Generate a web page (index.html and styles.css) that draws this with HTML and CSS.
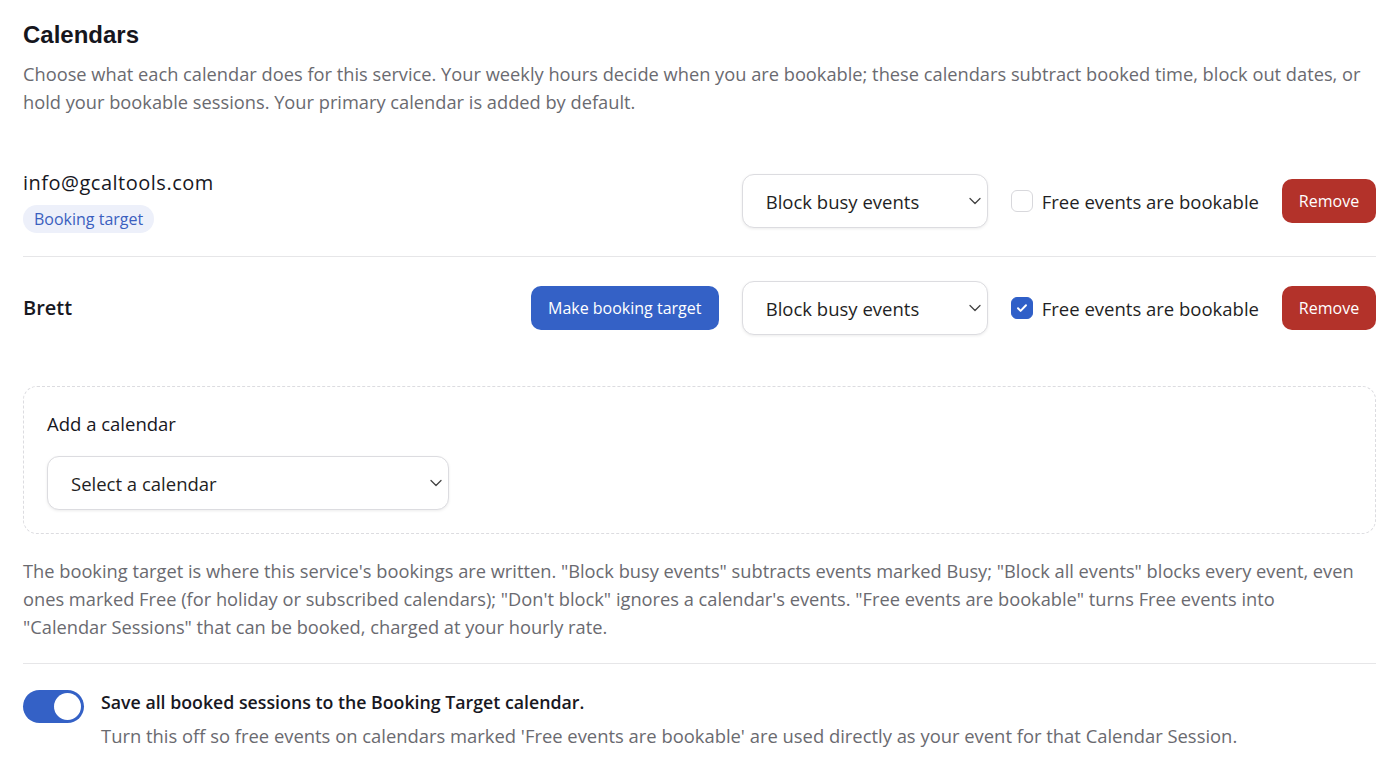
FILE: index.html
```html
<!DOCTYPE html>
<html>

<head>
    <meta charset="utf-8">
    <meta name="viewport" content="width=device-width">
    <title>Calendars</title>
    <link rel="stylesheet" href="styles.css">
</head>

<body>
    <div class="page">
        <h2 class="title">Calendars</h2>
        <p class="intro">Choose what each calendar does for this service. Your weekly hours decide when you are bookable; these calendars subtract booked time, block out dates, or hold your bookable sessions. Your primary calendar is added by default.</p>

        <div class="cal-list">
            <div class="cal-row">
                <div class="cal-name">
                    <div class="name">info@gcaltools.com</div>
                    <span class="badge">Booking target</span>
                </div>
                <div class="cal-controls">
                    <div class="select-wrap">
                        <select class="select">
                            <option>Block busy events</option>
                            <option>Block all events</option>
                            <option>Don't block</option>
                        </select>
                        <svg class="chev" width="12" height="8" viewBox="0 0 12 8"><path d="M1 1.5l5 5 5-5" fill="none" stroke="#444" stroke-width="1.3" stroke-linecap="round" stroke-linejoin="round"/></svg>
                    </div>
                    <label class="check">
                        <span class="box"></span>
                        <span>Free events are bookable</span>
                    </label>
                    <button class="btn btn-red">Remove</button>
                </div>
            </div>

            <div class="cal-row">
                <div class="cal-name">
                    <div class="name bold">Brett</div>
                </div>
                <div class="cal-controls">
                    <button class="btn btn-blue">Make booking target</button>
                    <div class="select-wrap">
                        <select class="select">
                            <option>Block busy events</option>
                            <option>Block all events</option>
                            <option>Don't block</option>
                        </select>
                        <svg class="chev" width="12" height="8" viewBox="0 0 12 8"><path d="M1 1.5l5 5 5-5" fill="none" stroke="#444" stroke-width="1.3" stroke-linecap="round" stroke-linejoin="round"/></svg>
                    </div>
                    <label class="check">
                        <span class="box on">
                            <svg width="14" height="14" viewBox="0 0 14 14"><path d="M3 7.3l2.6 2.6L11 4.3" fill="none" stroke="#fff" stroke-width="2" stroke-linecap="round" stroke-linejoin="round"/></svg>
                        </span>
                        <span>Free events are bookable</span>
                    </label>
                    <button class="btn btn-red">Remove</button>
                </div>
            </div>
        </div>

        <div class="add-box">
            <div class="add-label">Add a calendar</div>
            <div class="select-wrap wide">
                <select class="select">
                    <option>Select a calendar</option>
                </select>
                <svg class="chev" width="12" height="8" viewBox="0 0 12 8"><path d="M1 1.5l5 5 5-5" fill="none" stroke="#444" stroke-width="1.3" stroke-linecap="round" stroke-linejoin="round"/></svg>
            </div>
        </div>

        <p class="help">The booking target is where this service's bookings are written. "Block busy events" subtracts events marked Busy; "Block all events" blocks every event, even ones marked Free (for holiday or subscribed calendars); "Don't block" ignores a calendar's events. "Free events are bookable" turns Free events into "Calendar&nbsp;Sessions" that can be booked, charged at your hourly rate.</p>

        <div class="toggle-row">
            <span class="toggle"><span class="knob"></span></span>
            <div class="toggle-text">
                <div class="toggle-title">Save all booked sessions to the Booking Target calendar.</div>
                <div class="toggle-sub">Turn this off so free events on calendars marked 'Free events are bookable' are used directly as your event for that Calendar Session.</div>
            </div>
        </div>
    </div>
</body>

</html>
```

FILE: styles.css
```css
body {
    margin: 0;
    background: #fff;
    font-family: "Open Sans", "Lato", sans-serif;
    color: #1f1f24;
}

.page {
    padding: 19px 24px 20px 23px;
}

.title {
    margin: 0;
    font-family: "Liberation Sans", Arial, sans-serif;
    font-size: 24px;
    line-height: 32px;
    font-weight: bold;
    color: #16161d;
}

.intro {
    margin: 9px 0 0;
    font-size: 18.25px;
    line-height: 28px;
    color: #6a6a70;
}

.cal-list {
    margin-top: 29px;
}

.cal-row {
    display: flex;
    align-items: center;
    justify-content: space-between;
    padding: 24px 0 23px;
    border-bottom: 1px solid #e6e6e8;
}

.cal-row:last-child {
    border-bottom: none;
}

.name {
    font-size: 20px;
    line-height: 28px;
    font-weight: 500;
    letter-spacing: .5px;
    color: #18181f;
}

.name.bold {
    font-weight: 600;
    letter-spacing: 0;
}

.badge {
    display: inline-block;
    margin-top: 8px;
    padding: 0 11px;
    height: 28px;
    line-height: 28px;
    border-radius: 14px;
    background: #edf0fa;
    color: #3b5fbf;
    font-size: 16px;
}

.cal-controls {
    display: flex;
    align-items: center;
    gap: 23px;
}

.select-wrap {
    position: relative;
    width: 246px;
}

.select-wrap.wide {
    width: 402px;
}

.select {
    display: block;
    width: 100%;
    height: 54px;
    padding: 0 36px 0 23px;
    border: 1px solid #dcdce0;
    border-radius: 12px;
    background: #fff;
    box-shadow: 0 1px 3px rgba(0, 0, 0, .08);
    font-family: inherit;
    font-size: 18.5px;
    color: #1f1f24;
    appearance: none;
    -webkit-appearance: none;
}

.chev {
    position: absolute;
    right: 7px;
    top: 23px;
    pointer-events: none;
}

.check {
    display: flex;
    align-items: center;
    gap: 9px;
    font-size: 18.5px;
    color: #1f1f24;
}

.box {
    display: flex;
    align-items: center;
    justify-content: center;
    width: 20px;
    height: 20px;
    border: 1px solid #d8d8dc;
    border-radius: 6px;
    background: #fff;
}

.box.on {
    background: #2f5fc8;
    border-color: #2f5fc8;
}

.btn {
    height: 44px;
    padding: 0 10px;
    border: none;
    border-radius: 10px;
    font-family: inherit;
    font-size: 16px;
    font-weight: 500;
    color: #fff;
    cursor: pointer;
}

.btn-red {
    width: 94px;
    background: #b3322a;
}

.btn-blue {
    width: 188px;
    background: #3461c6;
}

.add-box {
    margin-top: 28px;
    padding: 24px 23px 23px;
    border: 1px dashed #dcdce0;
    border-radius: 14px;
}

.add-label {
    margin-bottom: 19px;
    font-size: 18.5px;
    line-height: 26px;
    font-weight: 500;
    color: #18181f;
}

.help {
    margin: 23px 0 0;
    padding-bottom: 22px;
    border-bottom: 1px solid #e6e6e8;
    font-size: 18.25px;
    line-height: 28px;
    color: #6a6a70;
}

.toggle-row {
    display: flex;
    align-items: flex-start;
    gap: 17px;
    margin-top: 25px;
}

.toggle {
    position: relative;
    flex: none;
    width: 61px;
    height: 33px;
    margin-top: 1px;
    border-radius: 17px;
    background: #3461c6;
}

.knob {
    position: absolute;
    right: 3px;
    top: 3px;
    width: 27px;
    height: 27px;
    border-radius: 50%;
    background: #fff;
}

.toggle-title {
    font-size: 17.75px;
    line-height: 26px;
    font-weight: 600;
    color: #18181f;
}

.toggle-sub {
    margin-top: 8px;
    font-size: 18.4px;
    line-height: 26px;
    color: #6a6a70;
}
```
